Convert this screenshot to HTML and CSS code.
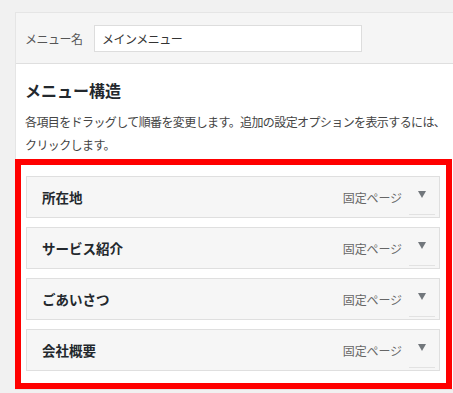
FILE: index.html
```html
<!DOCTYPE html>
<html lang="ja">
<head>
    <meta charset="UTF-8">
    <title>メニュー</title>
    <link rel="stylesheet" href="styles.css">
</head>
<body>
    <div class="panel">
        <!-- Menu name row -->
        <div class="panel-head">
            <label for="menuName" class="name-label">メニュー名</label>
            <input id="menuName" class="name-input" type="text" value="メインメニュー">
        </div>

        <div class="panel-body">
            <h3 class="section-title">メニュー構造</h3>
            <p class="section-desc">各項目をドラッグして順番を変更します。追加の設定オプションを表示するには、クリックします。</p>

            <!-- Highlighted menu items -->
            <div class="highlight">
                <ul class="menu-list">
                    <li class="menu-item">
                        <span class="item-title">所在地</span>
                        <span class="item-type">固定ページ</span>
                        <span class="item-arrow"></span>
                        <span class="item-dots"></span>
                    </li>
                    <li class="menu-item">
                        <span class="item-title">サービス紹介</span>
                        <span class="item-type">固定ページ</span>
                        <span class="item-arrow"></span>
                        <span class="item-dots"></span>
                    </li>
                    <li class="menu-item">
                        <span class="item-title">ごあいさつ</span>
                        <span class="item-type">固定ページ</span>
                        <span class="item-arrow"></span>
                        <span class="item-dots"></span>
                    </li>
                    <li class="menu-item">
                        <span class="item-title">会社概要</span>
                        <span class="item-type">固定ページ</span>
                        <span class="item-arrow"></span>
                        <span class="item-dots"></span>
                    </li>
                </ul>
            </div>
        </div>
    </div>
</body>
</html>
```

FILE: styles.css
```css
/* Reset */
* {
    margin: 0;
    padding: 0;
    box-sizing: border-box;
}

body {
    background-color: #f1f1f1;
    padding: 12px 0 0 15px;
    font-family: "Noto Sans CJK JP", "Liberation Sans", sans-serif;
    color: #444;
    overflow: hidden;
}

/* Panel */
.panel {
    width: 460px;
    background-color: #fff;
    border: 1px solid #e5e5e5;
    border-right: none;
}

.panel-head {
    display: flex;
    align-items: center;
    height: 51px;
    padding: 0 0 0 9px;
    background-color: #f5f5f5;
    border-bottom: 1px solid #dfdfdf;
}

.name-label {
    font-size: 12px;
    color: #555;
    width: 69px;
    letter-spacing: -0.5px;
}

.name-input {
    width: 268px;
    height: 27px;
    border: 1px solid #ddd;
    background-color: #fff;
    padding: 0 7px;
    font-family: inherit;
    font-size: 12px;
    color: #333;
    letter-spacing: -0.5px;
    outline: none;
}

/* Body */
.panel-body {
    padding: 14px 0 0 9px;
}

.section-title {
    font-size: 16px;
    font-weight: bold;
    color: #23282d;
    line-height: 24px;
    margin-bottom: 8px;
}

.section-desc {
    width: 430px;
    font-size: 12px;
    line-height: 23px;
    color: #444;
    letter-spacing: -0.6px;
    margin-bottom: 3px;
}

/* Red highlight box */
.highlight {
    width: 437px;
    margin-left: -10px;
    border: 6px solid #f00;
    padding: 11px 6px 12px 5px;
}

.menu-list {
    list-style: none;
    display: flex;
    flex-direction: column;
    gap: 9px;
}

.menu-item {
    position: relative;
    display: flex;
    align-items: center;
    height: 42px;
    padding: 0 13px 0 15px;
    background-color: #f6f6f6;
    border: 1px solid #dfdfdf;
}

.item-title {
    flex: 1;
    font-size: 13.5px;
    font-weight: bold;
    color: #23282d;
}

.item-type {
    font-size: 12px;
    color: #666;
    letter-spacing: -0.1px;
    margin-right: 16px;
}

.item-arrow {
    width: 0;
    height: 0;
    border-left: 4px solid transparent;
    border-right: 4px solid transparent;
    border-top: 7px solid #72777c;
    margin-top: -5px;
}

/* clipped handle text under the arrow */
.item-dots {
    position: absolute;
    right: 4px;
    bottom: 2px;
    width: 26px;
    height: 1px;
    background-color: #e2e2e2;
}
```
